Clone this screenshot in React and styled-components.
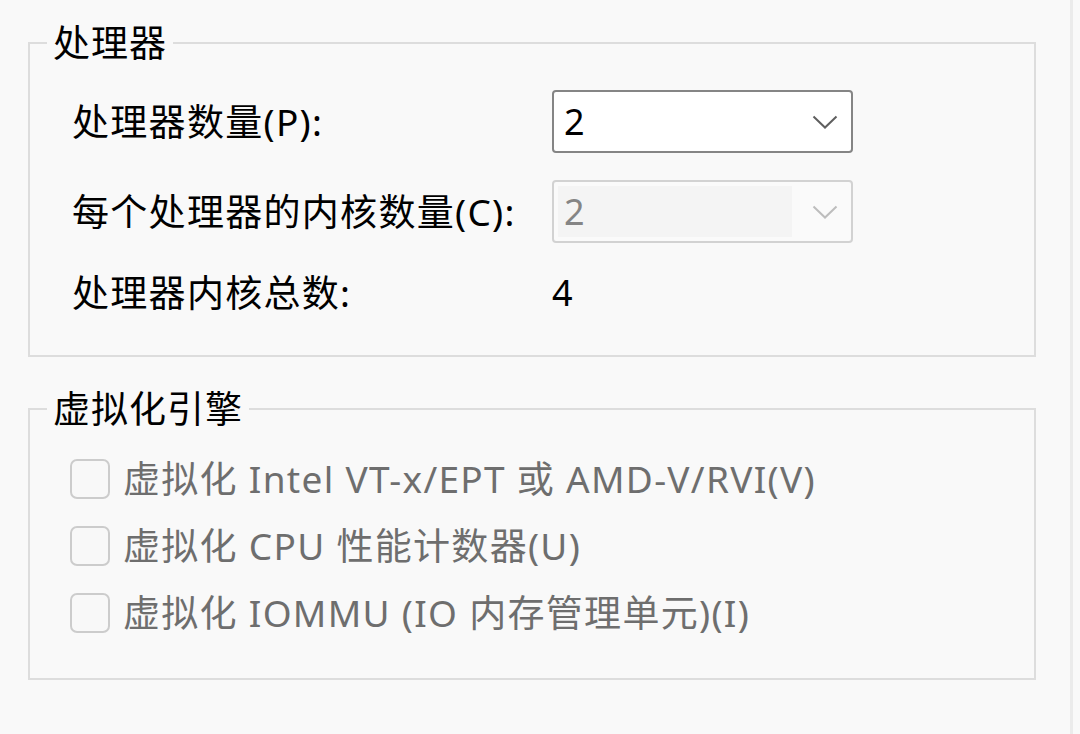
import React from "react";
import styled, { createGlobalStyle } from "styled-components";

const GlobalStyle = createGlobalStyle`
  html, body {
    margin: 0;
    padding: 0;
    background: #f9f9f9;
  }
  body {
    font-family: "Noto Sans", "Noto Sans CJK SC", sans-serif;
    color: #000;
  }
`;

const Page = styled.div`
  box-sizing: border-box;
  width: 1073px;
  height: 734px;
  padding: 23px 0 0 28px;
  border-right: 3px solid #ebebeb;
  background: #f9f9f9;
  overflow: hidden;
`;

const Group = styled.fieldset`
  box-sizing: border-box;
  width: 1008px;
  margin: 0 0 ${(p) => p.$gap || 0}px 0;
  padding: 0;
  border: 2px solid #dddddd;
  border-radius: 0;
  min-width: 0;
`;

const Legend = styled.legend`
  margin-left: 17px;
  padding: 0 6px;
  font-size: 37px;
  letter-spacing: 1px;
  line-height: 40px;
  color: #000;
`;

const Body = styled.div`
  padding: ${(p) => p.$pad};
`;

const Row = styled.div`
  display: flex;
  align-items: center;
  height: ${(p) => p.$h}px;
  margin-top: ${(p) => p.$mt || 0}px;
`;

const Label = styled.div`
  width: 480px;
  font-size: 37px;
  letter-spacing: 1.3px;
  line-height: 40px;
  white-space: nowrap;
  color: #000;
`;

const Value = styled.div`
  font-size: 36px;
  line-height: 40px;
  color: #000;
`;

const Combo = styled.div`
  box-sizing: border-box;
  width: 301px;
  height: 63px;
  display: flex;
  align-items: center;
  justify-content: space-between;
  padding: 0 13px 0 4px;
  border: 2px solid ${(p) => (p.$disabled ? "#d2d2d2" : "#858585")};
  border-radius: 4px;
  background: ${(p) => (p.$disabled ? "#fafafa" : "#ffffff")};
`;

const ComboText = styled.div`
  flex: 0 0 234px;
  box-sizing: border-box;
  height: 51px;
  display: flex;
  align-items: center;
  padding-left: 6px;
  font-size: 36px;
  color: ${(p) => (p.$disabled ? "#858585" : "#000")};
  background: ${(p) => (p.$disabled ? "#f4f4f4" : "transparent")};
`;

const Chevron = ({ color }) => (
  <svg width="26" height="14" viewBox="0 0 26 14">
    <path d="M1.5 1.5 L13 12.5 L24.5 1.5" fill="none" stroke={color} strokeWidth="2" />
  </svg>
);

const CheckRow = styled.div`
  display: flex;
  align-items: center;
  height: 40px;
  margin-top: ${(p) => p.$mt || 0}px;
  gap: 13px;
`;

const Box = styled.div`
  box-sizing: border-box;
  width: 40px;
  height: 40px;
  border: 2px solid #cccccc;
  border-radius: 7px;
  background: #f8f8f8;
`;

const CheckText = styled.div`
  font-size: 37px;
  letter-spacing: 1.3px;
  line-height: 40px;
  color: #6e6e6e;
  white-space: nowrap;
`;

export default function App() {
  return (
    <>
      <GlobalStyle />
      <Page>
        <Group $gap={32}>
          <Legend>处理器</Legend>
          <Body $pad="27px 0 42px 42px">
            <Row $h={63}>
              <Label>处理器数量(P):</Label>
              <Combo>
                <ComboText>2</ComboText>
                <Chevron color="#5f5f5f" />
              </Combo>
            </Row>
            <Row $h={63} $mt={27}>
              <Label>每个处理器的内核数量(C):</Label>
              <Combo $disabled>
                <ComboText $disabled>2</ComboText>
                <Chevron color="#bdbdbd" />
              </Combo>
            </Row>
            <Row $h={40} $mt={30}>
              <Label>处理器内核总数:</Label>
              <Value>4</Value>
            </Row>
          </Body>
        </Group>
        <Group>
          <Legend>虚拟化引擎</Legend>
          <Body $pad="30px 0 45px 40px">
            <CheckRow>
              <Box />
              <CheckText>虚拟化 Intel VT-x/EPT 或 AMD-V/RVI(V)</CheckText>
            </CheckRow>
            <CheckRow $mt={27}>
              <Box />
              <CheckText>虚拟化 CPU 性能计数器(U)</CheckText>
            </CheckRow>
            <CheckRow $mt={27}>
              <Box />
              <CheckText>虚拟化 IOMMU (IO 内存管理单元)(I)</CheckText>
            </CheckRow>
          </Body>
        </Group>
      </Page>
    </>
  );
}
